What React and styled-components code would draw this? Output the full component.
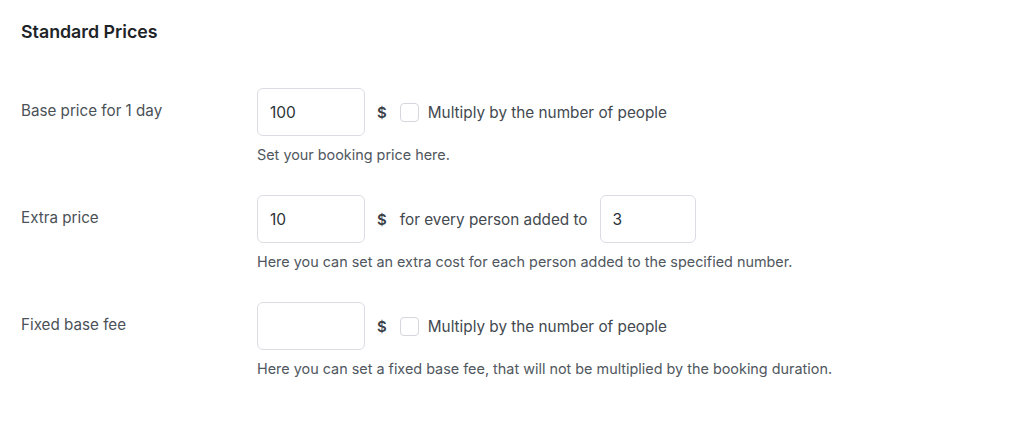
import React from "react";
import styled, { createGlobalStyle } from "styled-components";

const Global = createGlobalStyle`
  html, body { margin: 0; padding: 0; background: #ffffff; }
  body { font-family: Inter, "Noto Sans", "Liberation Sans", sans-serif; -webkit-font-smoothing: antialiased; }
`;

const Page = styled.div`
  padding: 20px 21px 0 21px;
  width: 1024px;
  height: 431px;
  box-sizing: border-box;
  background: #fff;
`;

const Title = styled.h2`
  margin: 0 0 44px 0;
  font-size: 17.8px;
  line-height: 24px;
  font-weight: 600;
  color: #1d2327;
`;

const Rows = styled.div`
  display: flex;
  flex-direction: column;
  gap: 30px;
`;

const Row = styled.div`
  display: grid;
  grid-template-columns: 236px 1fr;
`;

const Label = styled.div`
  font-size: 15.2px;
  line-height: 45px;
  color: #4b5157;
`;

const Field = styled.div`
  display: flex;
  flex-direction: column;
`;

const Controls = styled.div`
  display: flex;
  align-items: center;
  height: 48px;
`;

const Input = styled.input`
  box-sizing: border-box;
  width: ${(p) => p.$w || 108}px;
  height: 48px;
  padding: 0 12px;
  border: 1px solid #dcdde3;
  border-radius: 6px;
  font-family: inherit;
  font-size: 15.5px;
  color: #2c3338;
  background: #fff;
  outline: none;
`;

const Currency = styled.span`
  margin-left: 12px;
  font-size: 15px;
  font-weight: 600;
  color: #3c434a;
`;

const Check = styled.span`
  box-sizing: border-box;
  width: 19px;
  height: 19px;
  margin-left: 13px;
  border: 1px solid #d5d7dc;
  border-radius: 4px;
  background: #fff;
`;

const Text = styled.span`
  margin-left: ${(p) => p.$ml || 9}px;
  margin-right: ${(p) => p.$mr || 0}px;
  font-size: 15.3px;
  color: #43494f;
`;

const Desc = styled.p`
  margin: 9px 0 0 0;
  font-size: 14.4px;
  line-height: 20px;
  color: #50575e;
`;

export default function App() {
  return (
    <>
      <Global />
      <Page>
        <Title>Standard Prices</Title>
        <Rows>
          <Row>
            <Label>Base price for 1 day</Label>
            <Field>
              <Controls>
                <Input defaultValue="100" />
                <Currency>$</Currency>
                <Check />
                <Text>Multiply by the number of people</Text>
              </Controls>
              <Desc>Set your booking price here.</Desc>
            </Field>
          </Row>
          <Row>
            <Label>Extra price</Label>
            <Field>
              <Controls>
                <Input defaultValue="10" />
                <Currency>$</Currency>
                <Text $ml={13} $mr={12}>for every person added to</Text>
                <Input $w={96} defaultValue="3" />
              </Controls>
              <Desc>Here you can set an extra cost for each person added to the specified number.</Desc>
            </Field>
          </Row>
          <Row>
            <Label>Fixed base fee</Label>
            <Field>
              <Controls>
                <Input defaultValue="" />
                <Currency>$</Currency>
                <Check />
                <Text>Multiply by the number of people</Text>
              </Controls>
              <Desc>Here you can set a fixed base fee, that will not be multiplied by the booking duration.</Desc>
            </Field>
          </Row>
        </Rows>
      </Page>
    </>
  );
}
